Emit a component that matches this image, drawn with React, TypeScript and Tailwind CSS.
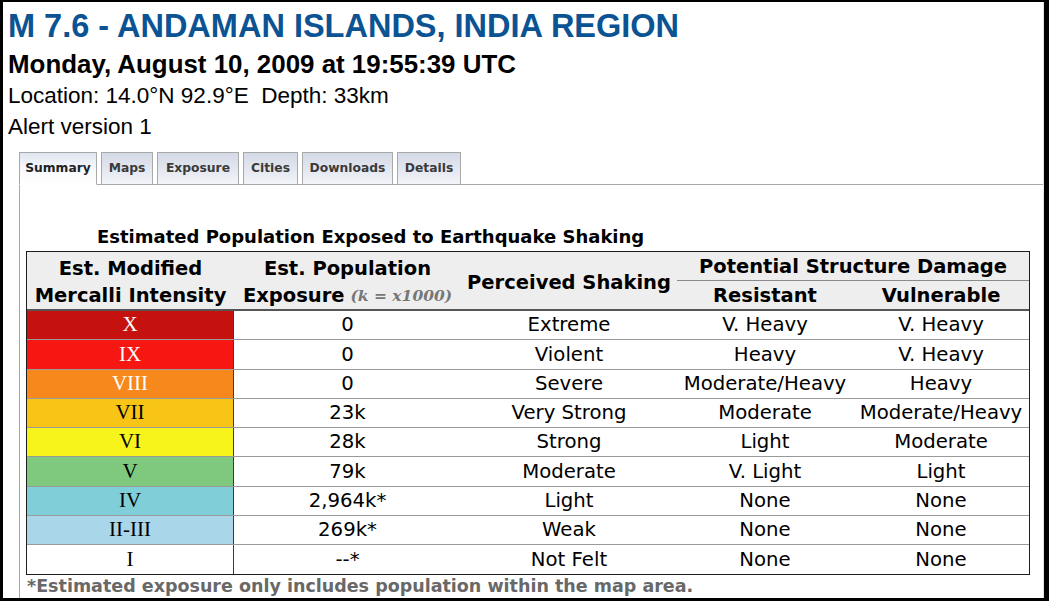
import React from "react";

type Row = {
  mmi: string;
  bg: string;
  fg: string;
  pop: string;
  shake: string;
  res: string;
  vul: string;
  last?: boolean;
};

const rows: Row[] = [
  { mmi: "X", bg: "bg-[#c5120e]", fg: "text-white", pop: "0", shake: "Extreme", res: "V. Heavy", vul: "V. Heavy" },
  { mmi: "IX", bg: "bg-[#f61713]", fg: "text-white", pop: "0", shake: "Violent", res: "Heavy", vul: "V. Heavy" },
  { mmi: "VIII", bg: "bg-[#f7881b]", fg: "text-white", pop: "0", shake: "Severe", res: "Moderate/Heavy", vul: "Heavy" },
  { mmi: "VII", bg: "bg-[#f8c415]", fg: "text-black", pop: "23k", shake: "Very Strong", res: "Moderate", vul: "Moderate/Heavy" },
  { mmi: "VI", bg: "bg-[#f7f41c]", fg: "text-black", pop: "28k", shake: "Strong", res: "Light", vul: "Moderate" },
  { mmi: "V", bg: "bg-[#7ec97d]", fg: "text-black", pop: "79k", shake: "Moderate", res: "V. Light", vul: "Light" },
  { mmi: "IV", bg: "bg-[#80ced8]", fg: "text-black", pop: "2,964k*", shake: "Light", res: "None", vul: "None" },
  { mmi: "II-III", bg: "bg-[#a9d6e8]", fg: "text-black", pop: "269k*", shake: "Weak", res: "None", vul: "None" },
  { mmi: "I", bg: "bg-white", fg: "text-black", pop: "--*", shake: "Not Felt", res: "None", vul: "None", last: true },
];

const tabs = [
  { label: "Summary", w: "w-[78px]", active: true },
  { label: "Maps", w: "w-[52px]", active: false },
  { label: "Exposure", w: "w-[82px]", active: false },
  { label: "Cities", w: "w-[55px]", active: false },
  { label: "Downloads", w: "w-[91px]", active: false },
  { label: "Details", w: "w-[64px]", active: false },
];

export default function App() {
  return (
    <div className="w-[1049px] h-[601px] bg-black pt-[2px] pl-[3px] pr-[5px] pb-[3px]">
      <div className="relative w-full h-full bg-white overflow-hidden border-r border-[#e4e4e4]">
        {/* Heading block */}
        <div className="pl-[5px] pt-[6px] font-['Liberation_Sans',Arial,sans-serif]">
          <div className="h-[36px] leading-[36px] text-[32.5px] font-bold text-[#0b5393] whitespace-nowrap">
            M 7.6 - ANDAMAN ISLANDS, INDIA REGION
          </div>
          <div className="mt-[4px] h-[32px] leading-[32px] text-[25.9px] font-bold text-black whitespace-nowrap">
            Monday, August 10, 2009 at 19:55:39 UTC
          </div>
          <div className="h-[31px] leading-[31px] text-[22.5px] text-black whitespace-pre">
            {"Location: 14.0°N 92.9°E  Depth: 33km"}
          </div>
          <div className="h-[31px] leading-[31px] text-[22.5px] text-black whitespace-nowrap">
            Alert version 1
          </div>
        </div>

        {/* Tabs panel */}
        <div className="ml-[16px] mt-[10px]">
          <div className="flex items-end gap-[4px] h-[33px] border-b border-[#a9a9a9] font-['DejaVu_Sans',Verdana,sans-serif]">
            {tabs.map((t) => (
              <div
                key={t.label}
                className={
                  t.active
                    ? `${t.w} h-[33px] -mb-px flex items-center justify-center border border-[#a9a9a9] border-b-white bg-gradient-to-b from-[#dfe5ef] via-[#f7f9fc] to-white text-[12.3px] font-bold text-[#222] whitespace-nowrap`
                    : `${t.w} h-[33px] -mb-px flex items-center justify-center border border-[#a9a9a9] bg-gradient-to-b from-[#d3d9e6] to-[#f2f4f9] text-[12.3px] font-bold text-[#3a3a3a] whitespace-nowrap`
                }
              >
                {t.label}
              </div>
            ))}
          </div>

          <div className="border-l border-[#a9a9a9] h-[420px] pt-[41px] font-['DejaVu_Sans',Verdana,sans-serif]">
            <div className="pl-[77px] h-[21px] leading-[21px] text-[18px] font-bold text-black whitespace-nowrap">
              Estimated Population Exposed to Earthquake Shaking
            </div>

            {/* Table */}
            <div className="ml-[6px] mt-[4px] w-[1004px] border border-[#1e1e1e] text-black">
              {/* Header */}
              <div className="flex bg-[#eeeeee] border-b-2 border-[#555555] text-[19.5px] font-bold">
                <div className="w-[207px] flex flex-col">
                  <div className="h-[29px] pt-[4px] flex items-center justify-center whitespace-nowrap">Est. Modified</div>
                  <div className="h-[28px] pt-[2px] flex items-center justify-center whitespace-nowrap">Mercalli Intensity</div>
                </div>
                <div className="w-[227px] flex flex-col">
                  <div className="h-[29px] pt-[4px] flex items-center justify-center whitespace-nowrap">Est. Population</div>
                  <div className="h-[28px] pt-[2px] flex items-center justify-center whitespace-nowrap">
                    Exposure
                    <span className="ml-[6px] text-[15.5px] italic font-bold text-[#777777] font-['DejaVu_Serif',Georgia,serif]">
                      (k = x1000)
                    </span>
                  </div>
                </div>
                <div className="w-[216px] pt-[4px] flex items-center justify-center whitespace-nowrap">Perceived Shaking</div>
                <div className="w-[352px] flex flex-col">
                  <div className="h-[29px] pt-[2px] flex items-center justify-center whitespace-nowrap border-b border-[#8a8a8a]">
                    Potential Structure Damage
                  </div>
                  <div className="h-[28px] pt-[2px] flex">
                    <div className="w-[176px] flex items-center justify-center">Resistant</div>
                    <div className="w-[176px] flex items-center justify-center">Vulnerable</div>
                  </div>
                </div>
              </div>

              {/* Body */}
              {rows.map((r) => (
                <div
                  key={r.mmi}
                  className={`flex h-[29.25px] text-[19.7px] ${r.last ? "" : "border-b border-[#9a9a9a]"}`}
                >
                  <div
                    className={`w-[207px] ${r.bg} ${r.fg} border-r border-[#3a3a3a] flex items-center justify-center font-['Liberation_Serif','Times_New_Roman',serif] text-[21px]`}
                  >
                    {r.mmi}
                  </div>
                  <div className="w-[227px] flex items-center justify-center whitespace-nowrap">{r.pop}</div>
                  <div className="w-[216px] flex items-center justify-center whitespace-nowrap">{r.shake}</div>
                  <div className="w-[176px] flex items-center justify-center whitespace-nowrap">{r.res}</div>
                  <div className="w-[176px] flex items-center justify-center whitespace-nowrap">{r.vul}</div>
                </div>
              ))}
            </div>

            <div className="ml-[7px] mt-[1px] h-[21px] leading-[21px] text-[17.5px] font-bold text-[#686868] whitespace-nowrap">
              *Estimated exposure only includes population within the map area.
            </div>
          </div>
        </div>
      </div>
    </div>
  );
}
